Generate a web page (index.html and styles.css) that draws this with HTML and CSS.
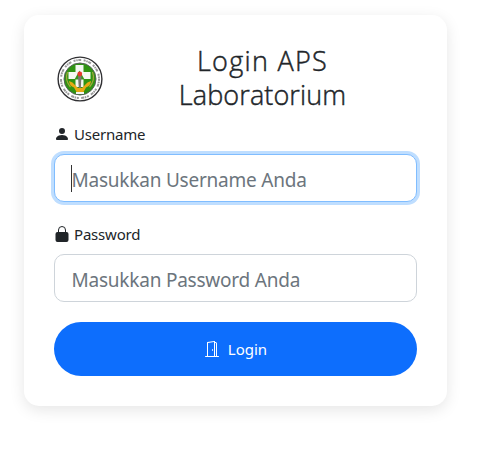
FILE: index.html
```html
<!DOCTYPE html>
<html lang="id">
<head>
<meta charset="utf-8">
<title>Login APS Laboratorium</title>
<link rel="stylesheet" href="styles.css">
</head>
<body>
<main class="card">
  <header class="head">
    <svg class="logo" viewBox="0 0 46 46" aria-hidden="true">
      <circle cx="23" cy="23" r="21.9" fill="#fff" stroke="#303033" stroke-width="1.4"/>
      <circle cx="23" cy="23" r="19" fill="none" stroke="#999" stroke-width="2" stroke-dasharray="2 .7 1.500 .6 3 2.500"/>
      <circle cx="23" cy="23" r="16" fill="#2f9412" stroke="#56605a" stroke-width="1"/>
      <path d="M18.500 9h8v7h7v7h-7v8h-8v-8h-7v-7h7z" fill="#f4f8f2"/>
      <path d="M22.500 14.500l5 9h-10z" fill="#37951c"/>
      <path d="M10.500 16q-3 8 3 15M35.500 16q3 8-3 15" fill="none" stroke="#a3a83c" stroke-width="1.200"/>
      <path d="M21 20h3.500l-.7 12h-2z" fill="#77776e"/>
      <circle cx="22.800" cy="18" r="2.400" fill="#e63a2c"/>
      <path d="M12 25q4 1 6 4l3 3h4l3-3q2-3 6-4-.5 5-5 6.500l-2.500 4.500h-7L17 31.500q-4.500-1.500-5-6.500z" fill="#e7a914"/>
      <path d="M19 36h8v2h-8z" fill="#f4f8f2"/>
    </svg>
    <h1 class="title"><span class="line one">Login APS</span><span class="line two">Laboratorium</span></h1>
  </header>
  <form>
    <label class="label" for="user">
      <svg class="icon" viewBox="0 0 16 16"><path d="M3 14s-1 0-1-1 1-4 6-4 6 3 6 4-1 1-1 1zm5-6a3 3 0 1 0 0-6 3 3 0 0 0 0 6"/></svg>
      <span>Username</span>
    </label>
    <input class="field focused" id="user" type="text" placeholder="Masukkan Username Anda">
    <label class="label" for="pass">
      <svg class="icon" viewBox="0 0 16 16"><path d="M4.500 7V4a3.500 3.500 0 0 1 7 0v3" fill="none" stroke="currentColor" stroke-width="1"/><path d="M3.500 6h9a2 2 0 0 1 2 2v6a2 2 0 0 1-2 2h-9a2 2 0 0 1-2-2V8a2 2 0 0 1 2-2z"/></svg>
      <span>Password</span>
    </label>
    <input class="field" id="pass" type="password" placeholder="Masukkan Password Anda">
    <button class="submit" type="button">
      <svg class="icon" viewBox="0 0 16 16"><path d="M8.500 10c-.276 0-.5-.448-.5-1s.224-1 .5-1 .5.448.5 1-.224 1-.5 1"/><path d="M10.828.122A.5.5 0 0 1 11 .5V1h.5A1.500 1.500 0 0 1 13 2.500V15h1.500a.5.5 0 0 1 0 1h-13a.5.5 0 0 1 0-1H3V1.500a.5.5 0 0 1 .43-.495l7-1a.5.5 0 0 1 .398.117M11.500 2H11v13h1V2.500a.5.5 0 0 0-.5-.5M4 1.934V15h6V1.077z"/></svg>
      <span>Login</span>
    </button>
  </form>
</main>
</body>
</html>
```
FILE: styles.css
```css
* { box-sizing: border-box; }
body {
  display: flow-root;
  min-height: 450px;
  margin: 0;
  background: #fff;
  color: #212529;
  font-family: "Noto Sans", sans-serif;
}
.card {
  width: 423px;
  height: 391px;
  margin: 15px 0 0 24px;
  padding: 30px;
  border-radius: 15px;
  background: #fff;
  box-shadow: 0 4px 15px rgba(0, 0, 0, .1);
}
.head {
  display: flex;
  align-items: center;
  height: 68px;
  margin-bottom: 9px;
}
.logo { width: 46px; height: 46px; margin-left: 3px; flex: none; }
.title {
  flex: 1;
  margin: 0 0 2px;
  padding-left: 5px;
  text-align: center;
  font: 300 27px/34px "Open Sans", sans-serif;
  -webkit-text-stroke: .45px #212529;
}
.line { display: block; }
.one { letter-spacing: 1.3px; }
.two { letter-spacing: .1px; }
.label {
  display: flex;
  align-items: center;
  gap: 4px;
  height: 24px;
  margin-bottom: 8px;
  font-size: 15px;
  letter-spacing: -.2px;
}
.icon { width: 16px; height: 16px; fill: currentColor; flex: none; }
.field {
  display: block;
  width: 363px;
  height: 48px;
  margin: 0 0 20px;
  padding: 4px 16.5px 0;
  border: 1px solid #ced4da;
  border-radius: 10px;
  background: #fff;
  font: 19px "Noto Sans", sans-serif;
  letter-spacing: -.22px;
  outline: 0;
}
.field::placeholder { color: #6c757d; opacity: 1; }
.focused {
  border-color: #80bdff;
  background: linear-gradient(#333, #333) 16px 10px / 1px 27px no-repeat #fff;
  box-shadow: 0 0 0 3px #bfdeff;
}
.submit {
  display: flex;
  align-items: center;
  justify-content: center;
  gap: 8px;
  width: 363px;
  height: 54px;
  padding: 0;
  border: 0;
  border-radius: 27px;
  background: #0d6efd;
  color: #fff;
  font: 15px "Noto Sans", sans-serif;
}
```
